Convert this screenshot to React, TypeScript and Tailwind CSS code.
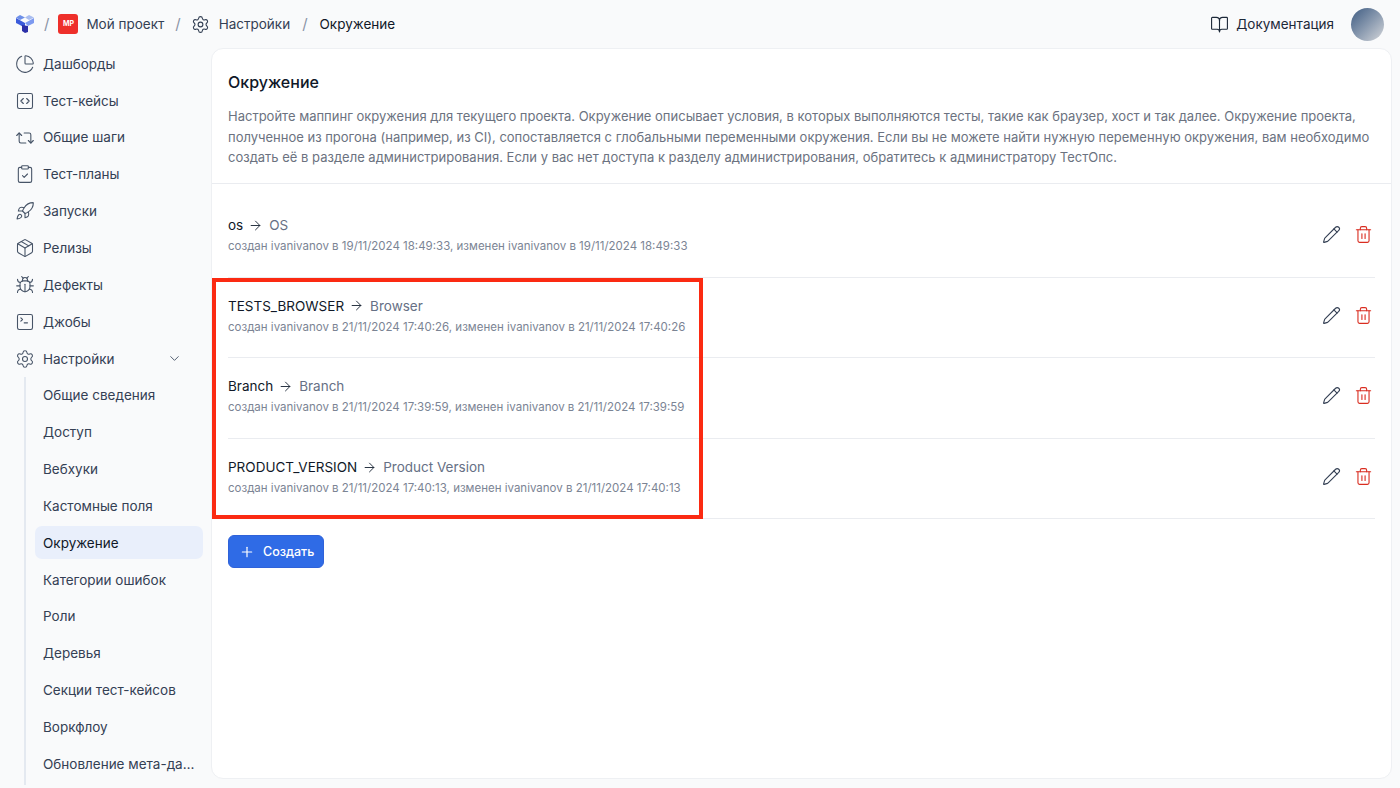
import { BookOpen, Bug, ChevronDown, ClipboardCheck, Package, Pencil, PieChart, Plus, Repeat2, Rocket, Settings, SquareCode, SquareTerminal, Trash2, ArrowRight } from "lucide-react";

const mainNav = [
  { label: "Дашборды", Icon: PieChart },
  { label: "Тест-кейсы", Icon: SquareCode },
  { label: "Общие шаги", Icon: Repeat2 },
  { label: "Тест-планы", Icon: ClipboardCheck },
  { label: "Запуски", Icon: Rocket },
  { label: "Релизы", Icon: Package },
  { label: "Дефекты", Icon: Bug },
  { label: "Джобы", Icon: SquareTerminal },
];

const settingsNav = [
  "Общие сведения",
  "Доступ",
  "Вебхуки",
  "Кастомные поля",
  "Окружение",
  "Категории ошибок",
  "Роли",
  "Деревья",
  "Секции тест-кейсов",
  "Воркфлоу",
  "Обновление мета-данных",
];

const rows = [
  { from: "os", to: "OS", meta: "создан ivanivanov в 19/11/2024 18:49:33, изменен ivanivanov в 19/11/2024 18:49:33" },
  { from: "TESTS_BROWSER", to: "Browser", meta: "создан ivanivanov в 21/11/2024 17:40:26, изменен ivanivanov в 21/11/2024 17:40:26" },
  { from: "Branch", to: "Branch", meta: "создан ivanivanov в 21/11/2024 17:39:59, изменен ivanivanov в 21/11/2024 17:39:59" },
  { from: "PRODUCT_VERSION", to: "Product Version", meta: "создан ivanivanov в 21/11/2024 17:40:13, изменен ivanivanov в 21/11/2024 17:40:13" },
];

const Logo = () => (
  <svg width="20" height="20" viewBox="0 0 20 20">
    <path d="M5 1 10 3.5 5 6 1 3.5Z" fill="#6d8fe8" />
    <path d="M14 1 19 3.5 14 6 10 3.5Z" fill="#a9bdf0" />
    <path d="M1 4 10 9 10 14 5 11 1 9Z" fill="#3b5bdb" />
    <path d="M19 4 19 9 13 12 10 9Z" fill="#7d9af0" />
    <path d="M7 11 13 12 13 18 10 19 7 17Z" fill="#2c2fa8" />
  </svg>
);

const Slash = () => <span className="text-[15px] text-[#8a94a6]">/</span>;

export default function App() {
  return (
    <div className="relative h-[788px] w-[1400px] overflow-hidden bg-[#f9fafb] font-['Inter',sans-serif]">
      <header className="flex h-[48px] items-center pl-[15px] pr-[16px] text-[13.5px]">
        <Logo />
        <div className="ml-[9px]"><Slash /></div>
        <div className="ml-[9px] flex h-[20px] w-[20px] items-center justify-center rounded-[3px] bg-[#ee2f2a] text-[7px] font-bold text-white">MP</div>
        <span className="ml-[8px] text-[#344054]">Мой проект</span>
        <div className="ml-[11px]"><Slash /></div>
        <Settings size={19} strokeWidth={1.4} className="ml-[10px] text-[#344054]" />
        <span className="ml-[9px] text-[#344054]">Настройки</span>
        <div className="ml-[12px]"><Slash /></div>
        <span className="ml-[12px] text-[#101828]">Окружение</span>
        <div className="ml-auto flex items-center">
          <BookOpen size={19} strokeWidth={1.4} className="text-[#1d2939]" />
          <span className="ml-[7px] text-[#1d2939]">Документация</span>
          <div className="ml-[17px] h-[33px] w-[33px] rounded-full bg-gradient-to-br from-[#3f5c82] to-[#d5d7da]" />
        </div>
      </header>

      <div className="flex h-[740px]">
        <aside className="w-[211px] shrink-0 overflow-hidden text-[13.5px] text-[#344054]">
          <nav className="mt-[-2.5px] pl-[15px]">
            {mainNav.map(({ label, Icon }) => (
              <div key={label} className="flex h-[36.85px] items-center">
                <Icon size={20} strokeWidth={1.3} className="shrink-0 text-[#475467]" />
                <span className="ml-[8px]">{label}</span>
              </div>
            ))}
            <div className="flex h-[36.85px] items-center">
              <Settings size={20} strokeWidth={1.3} className="shrink-0 text-[#475467]" />
              <span className="ml-[8px]">Настройки</span>
              <ChevronDown size={15} strokeWidth={1.5} className="ml-[53px] text-[#475467]" />
            </div>
          </nav>
          <div className="ml-[24px] h-[408px] border-l-2 border-[#e4e9f0] pl-[9px] pr-[8px]">
            {settingsNav.map((label) => (
              <div key={label} className="flex h-[36.85px] items-center">
                <div className={label === "Окружение" ? "flex h-[33px] w-full items-center rounded-[7px] bg-[#e9effb] px-[8px] text-[#101828]" : "flex w-full items-center px-[8px]"}>
                  <span className="truncate">{label}</span>
                </div>
              </div>
            ))}
          </div>
        </aside>

        <main className="mb-[9px] mr-[8px] flex-1 rounded-[12px] border border-[#eef0f3] bg-white">
          <div className="h-[135px] border-b border-[#eaecf0] px-[16px] pt-[23px]">
            <h1 className="text-[16px] font-medium leading-[20px] text-[#101828]">Окружение</h1>
            <p className="mt-[14px] text-[13px] leading-[20.5px] text-[#6b7280]">
              Настройте маппинг окружения для текущего проекта. Окружение описывает условия, в которых выполняются тесты, такие как браузер, хост и так далее. Окружение проекта, полученное из прогона (например, из CI), сопоставляется с глобальными переменными окружения. Если вы не можете найти нужную переменную окружения, вам необходимо создать её в разделе администрирования. Если у вас нет доступа к разделу администрирования, обратитесь к администратору ТестОпс.
            </p>
          </div>
          <div className="px-[16px] pt-[13px]">
            {rows.map((row) => (
              <div key={row.from} className="flex h-[80.6px] items-center justify-between border-b border-[#eaecf0] pb-[4px]">
                <div>
                  <div className="flex items-center text-[13.5px] leading-[20px]">
                    <span className="text-[#101828]">{row.from}</span>
                    <ArrowRight size={15} strokeWidth={1.5} className="mx-[4px] ml-[5px] text-[#1d2939]" />
                    <span className="ml-[2px] text-[#667085]">{row.to}</span>
                  </div>
                  <div className="mt-[3px] text-[11.5px] leading-[16px] text-[#7b8494]">{row.meta}</div>
                </div>
                <div className="flex items-center gap-[13px] pr-[2px]">
                  <Pencil size={19} strokeWidth={1.4} className="text-[#344054]" />
                  <Trash2 size={19} strokeWidth={1.4} className="text-[#d92d20]" />
                </div>
              </div>
            ))}
            <button className="mt-[16px] flex h-[33px] w-[96px] items-center rounded-[6px] border border-[#2f62d9] bg-[#2f6be6] pl-[10px] text-[12.5px] font-medium text-white">
              <Plus size={16} strokeWidth={1.8} />
              <span className="ml-[8px]">Создать</span>
            </button>
          </div>
        </main>
      </div>

      <div className="absolute left-[212px] top-[278px] h-[241px] w-[491px] border-4 border-[#fb2a12]" />
    </div>
  );
}
